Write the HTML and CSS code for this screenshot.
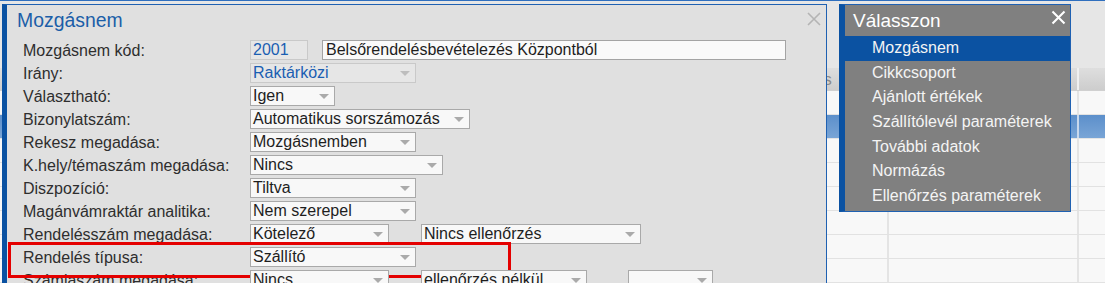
FILE: index.html
```html
<!DOCTYPE html>
<html lang="hu">
<head>
<meta charset="utf-8">
<title>Mozgásnem</title>
<link rel="stylesheet" href="styles.css">
</head>
<body>
<div class="screen">
  <div class="backdrop">
    <div class="topstrip"></div>
    <div class="appbody">
      <div class="toolbar"></div>
      <div class="grid">
        <div class="grow ghead"><div class="c1"><span class="htext">Megnevezés</span></div><div class="c2"></div><div class="c3"></div></div>
        <div class="grow"><div class="c1"></div><div class="c2"></div><div class="c3"></div></div>
        <div class="grow gsel"><div class="c1"></div><div class="c2"></div><div class="c3"></div></div>
        <div class="grow"><div class="c1"></div><div class="c2"></div><div class="c3"></div></div>
        <div class="grow"><div class="c1"></div><div class="c2"></div><div class="c3"></div></div>
        <div class="grow"><div class="c1"></div><div class="c2"></div><div class="c3"></div></div>
        <div class="grow"><div class="c1"></div><div class="c2"></div><div class="c3"></div></div>
        <div class="grow"><div class="c1"></div><div class="c2"></div><div class="c3"></div></div>
        <div class="grow"><div class="c1"></div><div class="c2"></div><div class="c3"></div></div>
      </div>
    </div>
  </div>

  <div class="dialog">
    <div class="dlg-head">
      <div class="dlg-title">Mozgásnem</div>
      <svg class="dlg-close" width="14" height="14" viewBox="0 0 14 14"><path d="M1 1 L13 13 M13 1 L1 13" stroke="#b4b4b4" stroke-width="1.6" fill="none"/></svg>
    </div>
    <div class="form">
      <div class="row">
        <div class="lbl">Mozgásnem kód:</div>
        <div class="ctrls">
          <div class="box ro w58">2001</div>
          <div class="box txt w464">Belsőrendelésbevételezés Központból</div>
        </div>
      </div>
      <div class="row">
        <div class="lbl">Irány:</div>
        <div class="ctrls"><div class="box ro sel w166">Raktárközi</div></div>
      </div>
      <div class="row">
        <div class="lbl">Választható:</div>
        <div class="ctrls"><div class="box sel w85">Igen</div></div>
      </div>
      <div class="row">
        <div class="lbl">Bizonylatszám:</div>
        <div class="ctrls"><div class="box sel w220">Automatikus sorszámozás</div></div>
      </div>
      <div class="row">
        <div class="lbl">Rekesz megadása:</div>
        <div class="ctrls"><div class="box sel w166">Mozgásnemben</div></div>
      </div>
      <div class="row">
        <div class="lbl">K.hely/témaszám megadása:</div>
        <div class="ctrls"><div class="box sel w193">Nincs</div></div>
      </div>
      <div class="row">
        <div class="lbl">Diszpozíció:</div>
        <div class="ctrls"><div class="box sel w166">Tiltva</div></div>
      </div>
      <div class="row">
        <div class="lbl">Magánvámraktár analitika:</div>
        <div class="ctrls"><div class="box sel w166">Nem szerepel</div></div>
      </div>
      <div class="row">
        <div class="lbl">Rendelésszám megadása:</div>
        <div class="ctrls gap32">
          <div class="box sel w139">Kötelező</div>
          <div class="box sel w220">Nincs ellenőrzés</div>
        </div>
      </div>
      <div class="row highlight">
        <div class="lbl">Rendelés típusa:</div>
        <div class="ctrls"><div class="box sel w166">Szállító</div></div>
      </div>
      <div class="row">
        <div class="lbl">Számlaszám megadása:</div>
        <div class="ctrls gap32">
          <div class="box sel w139">Nincs</div>
          <div class="box sel w166">ellenőrzés nélkül</div>
          <div class="box sel w85 ml9"></div>
        </div>
      </div>
    </div>
  </div>

  <div class="popup">
    <div class="pop-head">
      <span class="pop-title">Válasszon</span>
      <svg class="pop-close" width="15" height="15" viewBox="0 0 15 15"><path d="M1.5 1.5 L13.5 13.5 M13.5 1.5 L1.5 13.5" stroke="#ffffff" stroke-width="2.1" fill="none"/></svg>
    </div>
    <ul class="pop-list">
      <li class="active">Mozgásnem</li>
      <li>Cikkcsoport</li>
      <li>Ajánlott értékek</li>
      <li>Szállítólevél paraméterek</li>
      <li>További adatok</li>
      <li>Normázás</li>
      <li>Ellenőrzés paraméterek</li>
    </ul>
  </div>
</div>
</body>
</html>
```

FILE: styles.css
```css
* { box-sizing: border-box; }
html, body { margin: 0; padding: 0; }
body {
  font-family: "Liberation Sans", Arial, sans-serif;
  background: #e6e6e6;
}
.screen {
  position: relative;
  width: 1105px;
  height: 283px;
  overflow: hidden;
}

/* backdrop application */
.backdrop { width: 1105px; height: 283px; display: flex; flex-direction: column; }
.topstrip { height: 4px; background: #e4e4e4; }
.appbody { flex: 1; border-top: 1px solid #2f6fbe; background: #e8e8e8; display: flex; flex-direction: column; }
.toolbar { height: 67px; background: #e6e6e6; }
.grid { flex: 1; background: #f8f8f8; }
.grow { display: flex; height: 24px; border-bottom: 1px solid #e2e2e2; }
.grow .c1 { width: 889px; border-right: 2px solid #e4e4e4; }
.grow .c2 { width: 190px; border-right: 2px solid #e4e4e4; }
.grow .c3 { flex: 1; }
.ghead { height: 23px; background: linear-gradient(#dedede, #cdcdcd); border-bottom: 1px solid #d0d0d0; }
.ghead .c1, .ghead .c2 { border-right: 2px solid #f0f0f0; }
.htext { display: block; margin-left: 741px; font-size: 16px; line-height: 23px; color: #8a8a8a; white-space: nowrap; }
.gsel { background: linear-gradient(#5c8fcb, #79a5d6); border-bottom: 1px solid #e4e4e4; }
.gsel .c1, .gsel .c2 { border-right: 2px solid #c8d8ec; }

/* dialog */
.dialog {
  position: absolute;
  left: 2px;
  top: 4px;
  width: 825px;
  height: 300px;
  background: #e0e0e0;
  border-top: 1px solid #1f61b2;
  border-left: 5px solid #0b52a2;
  border-right: 1px solid #1f61b2;
  padding: 3px 0 0 16px;
}
.dlg-head { display: flex; justify-content: space-between; align-items: flex-start; }
.dlg-title {
  margin-left: -6px;
  font-size: 19.4px;
  line-height: 24px;
  color: #1b5ea8;
}
.dlg-close { margin: 4px 5px 0 0; }
.form { margin-top: 8px; display: flex; flex-direction: column; gap: 3px; }
.row { display: flex; height: 20px; align-items: stretch; }
.lbl {
  width: 227px;
  font-size: 16px;
  line-height: 20px;
  padding-top: 1px;
  color: #2e2e2e;
  white-space: nowrap;
}
.ctrls { display: flex; gap: 14px; }
.ctrls.gap32 { gap: 32px; }
.ml9 { margin-left: 9px; }
.box {
  position: relative;
  height: 20px;
  border: 1px solid #a9a9a9;
  background: #f8f8f8;
  font-size: 16px;
  line-height: 18px;
  padding: 0 2px;
  color: #1e1e1e;
  white-space: nowrap;
  overflow: hidden;
}
.box.txt { background: #fafafa; border-color: #a4a4a4; padding-left: 3px; }
.box.ro { background: #e6e6e6; border-color: #c9c9c9; color: #1a5eb2; }
.box.sel::after {
  content: "";
  position: absolute;
  right: 5px;
  top: 7px;
  width: 0;
  height: 0;
  border-left: 5px solid transparent;
  border-right: 5px solid transparent;
  border-top: 5px solid #aaaaaa;
}
.box.ro.sel::after { border-top-color: #bdbdbd; }
.w58 { width: 58px; }
.w85 { width: 85px; }
.w139 { width: 139px; }
.w166 { width: 166px; }
.w193 { width: 193px; }
.w220 { width: 220px; }
.w464 { width: 464px; }

.highlight { position: relative; }
.highlight::after {
  content: "";
  position: absolute;
  left: -15px;
  top: -5px;
  width: 497px;
  height: 30px;
  border: 3px solid #e40000;
}

/* popup */
.popup {
  position: absolute;
  left: 839px;
  top: 4px;
  width: 232px;
  height: 208px;
  background: #808080;
  border-top: 1px solid #1f61b2;
  border-left: 6px solid #0b52a2;
  border-right: 1px solid #1f61b2;
  border-bottom: 1px solid #1f61b2;
}
.pop-head {
  height: 31px;
  display: flex;
  justify-content: space-between;
  align-items: flex-start;
  padding-left: 8px;
}
.pop-title { font-size: 19px; line-height: 31px; color: #ffffff; }
.pop-close { margin: 5px 4px 0 0; }
.pop-list { list-style: none; margin: 0; padding: 0; }
.pop-list li {
  height: 24.7px;
  line-height: 24.7px;
  padding-left: 27px;
  font-size: 16px;
  color: #f4f4f4;
  white-space: nowrap;
}
.pop-list li.active { background: #0b52a2; }
```
